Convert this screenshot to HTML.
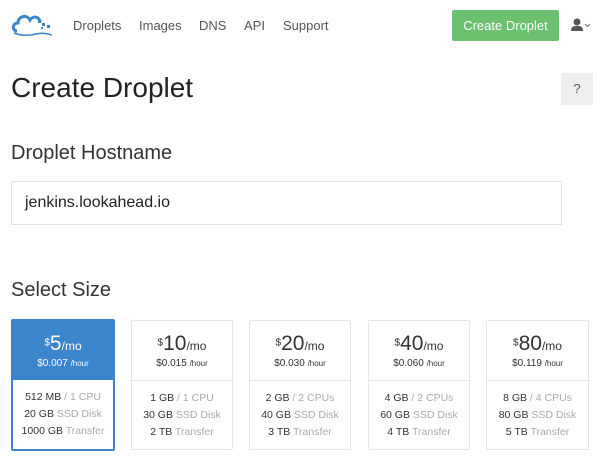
<!DOCTYPE html><html><head><style>
body{margin:0;width:600px;height:457px;background:#fff;font-family:"Liberation Sans",sans-serif;color:#333;position:relative;overflow:hidden}
.a{position:absolute}
.nav{top:18px;font-size:13px;color:#555}
.card{position:absolute;top:320px;width:102px;height:130px;border:1px solid #e6e6e6;border-radius:2px;text-align:center;box-sizing:border-box}
.card .t{height:60px;border-bottom:1px solid #e6e6e6;box-sizing:border-box;padding-top:11px}
.p{font-size:11px;color:#333}.p b{font-size:21px;font-weight:normal}.p i{font-style:normal;font-size:12px}
.h{font-size:10px;margin-top:2px}.h small{font-size:8px}
.s{font-size:10.5px;line-height:17px;padding-top:9px;color:#333}.s span{color:#aaa}
.sel{border:2px solid #3a85cc;}
.sel .t{background:#3a85cc;color:#fff;border-bottom:0;height:59px}
.sel .p{color:#fff}
</style></head><body>
<svg class="a" style="left:10px;top:12px" width="42" height="26" viewBox="0 0 42 26"><path d="M7 19c-5 0-5-8 1-8 0-7 9-9 12-3 3-5 10-3 10 2" fill="none" stroke="#3a85cc" stroke-width="3"/><rect x="28" y="8" width="3" height="3" fill="#3a85cc"/><rect x="32" y="11" width="3" height="3" fill="#3a85cc"/><rect x="37" y="13" width="3" height="3" fill="#3a85cc"/><rect x="31" y="15" width="2" height="2" fill="#3a85cc"/><path d="M4 21q10 4 22 1q8-2 16 1" fill="none" stroke="#3a85cc" stroke-width="1.5"/></svg>
<div class="a nav" style="left:73px">Droplets</div>
<div class="a nav" style="left:139px">Images</div>
<div class="a nav" style="left:199px">DNS</div>
<div class="a nav" style="left:244px">API</div>
<div class="a nav" style="left:283px">Support</div>
<div class="a" style="left:452px;top:10px;width:107px;height:31px;background:#6cc070;border-radius:2px;color:#fff;font-size:13px;text-align:center;line-height:31px">Create Droplet</div>
<svg class="a" style="left:571px;top:18px" width="22" height="14" viewBox="0 0 22 14"><circle cx="6" cy="4" r="3.5" fill="#555"/><path d="M0 13c0-5 3-5 6-5s6 0 6 5z" fill="#555"/><path d="M14 6l2.5 2.5L19 6" fill="none" stroke="#777" stroke-width="1"/></svg>
<div class="a" style="left:11px;top:72px;font-size:28px;color:#222">Create Droplet</div>
<div class="a" style="left:561px;top:73px;width:32px;height:32px;background:#eee;border-radius:2px;text-align:center;line-height:32px;font-size:13px;color:#555">?</div>
<div class="a" style="left:11px;top:142px;font-size:20px;color:#333">Droplet Hostname</div>
<div class="a" style="left:11px;top:181px;width:551px;height:44px;border:1px solid #e2e2e2;box-sizing:border-box;font-size:16px;line-height:42px;padding-left:13px;color:#222">jenkins.lookahead.io</div>
<div class="a" style="left:11px;top:279px;font-size:20px;color:#333">Select Size</div>
<div class="card sel" style="left:11px;width:104px;top:319px;height:132px"><div class="t"><div class="p"><sup style="font-size:10px">$</sup><b>5</b><i>/mo</i></div><div class="h">$0.007 <small>/hour</small></div></div><div class="s">512 MB <span>/ 1 CPU</span><br>20 GB <span>SSD Disk</span><br>1000 GB <span>Transfer</span></div></div>
<div class="card" style="left:131px"><div class="t"><div class="p"><sup style="font-size:10px">$</sup><b>10</b><i>/mo</i></div><div class="h">$0.015 <small>/hour</small></div></div><div class="s">1 GB <span>/ 1 CPU</span><br>30 GB <span>SSD Disk</span><br>2 TB <span>Transfer</span></div></div>
<div class="card" style="left:249px"><div class="t"><div class="p"><sup style="font-size:10px">$</sup><b>20</b><i>/mo</i></div><div class="h">$0.030 <small>/hour</small></div></div><div class="s">2 GB <span>/ 2 CPUs</span><br>40 GB <span>SSD Disk</span><br>3 TB <span>Transfer</span></div></div>
<div class="card" style="left:368px"><div class="t"><div class="p"><sup style="font-size:10px">$</sup><b>40</b><i>/mo</i></div><div class="h">$0.060 <small>/hour</small></div></div><div class="s">4 GB <span>/ 2 CPUs</span><br>60 GB <span>SSD Disk</span><br>4 TB <span>Transfer</span></div></div>
<div class="card" style="left:486px;width:103px"><div class="t"><div class="p"><sup style="font-size:10px">$</sup><b>80</b><i>/mo</i></div><div class="h">$0.119 <small>/hour</small></div></div><div class="s">8 GB <span>/ 4 CPUs</span><br>80 GB <span>SSD Disk</span><br>5 TB <span>Transfer</span></div></div>
</body></html>
